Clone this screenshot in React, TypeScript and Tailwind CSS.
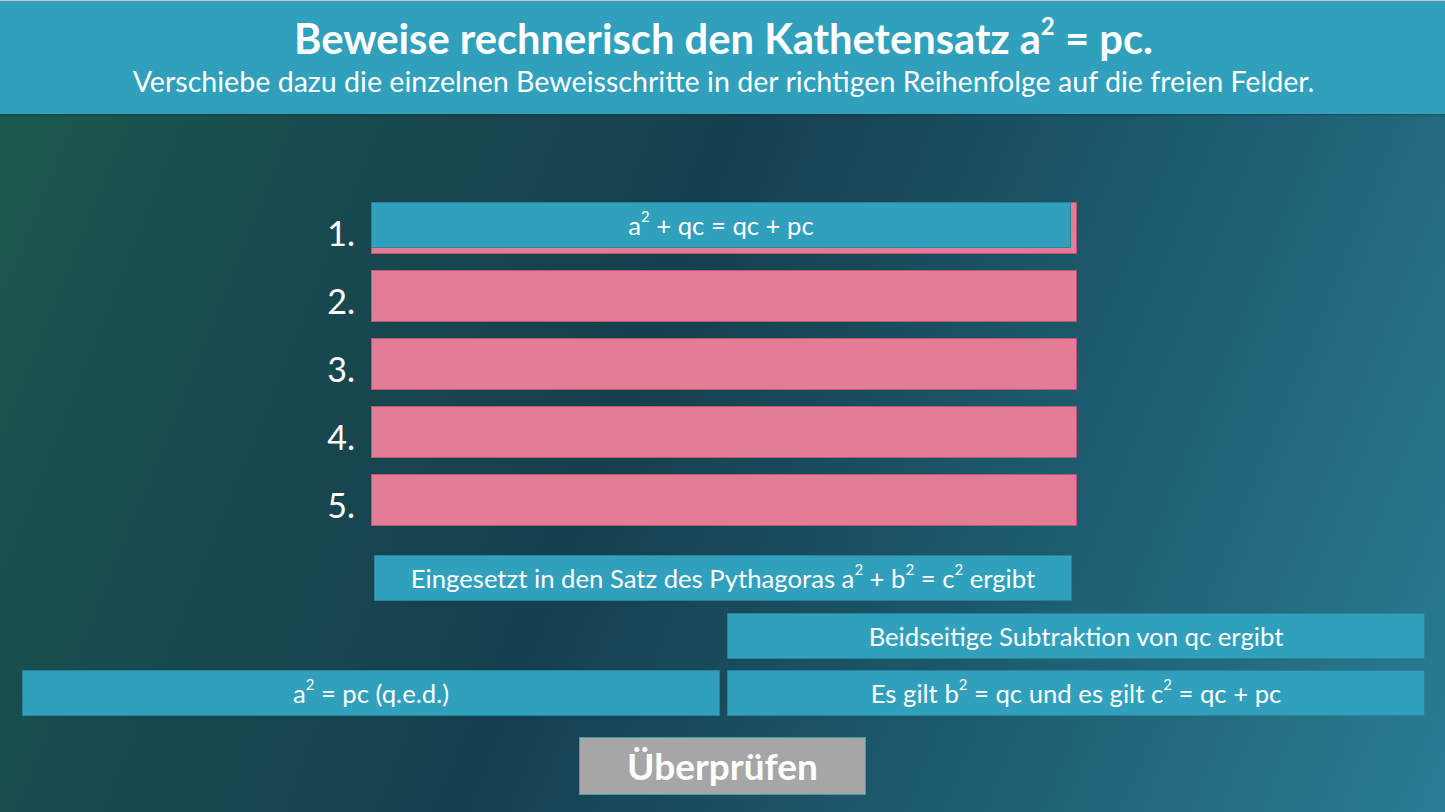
import React from 'react';

const font = { fontFamily: 'Lato, "Open Sans", sans-serif' };

function Sup({ children }: { children: React.ReactNode }) {
  return <sup className="relative -top-[0.18em] text-[0.58em] align-super leading-none">{children}</sup>;
}

function Card({ children, className = '' }: { children: React.ReactNode; className?: string }) {
  return (
    <div
      className={`flex h-[46px] w-[698px] items-center justify-center border border-[#2a819b] bg-[#30a0bd] text-[25.7px] text-white ${className}`}
    >
      <span>{children}</span>
    </div>
  );
}

export default function App() {
  const slots = [1, 2, 3, 4, 5];

  return (
    <div
      style={font}
      className="flex h-[812px] w-full flex-col overflow-hidden bg-[linear-gradient(112deg,#1b5b4c_0%,#18484f_25%,#163f4f_45%,#1c5a6d_70%,#2a7d93_100%)] text-white"
    >
      {/* Header */}
      <div className="flex h-[114px] flex-col items-center border-t border-t-[#c8c8c8] bg-[#30a0bd] pl-[2px] shadow-[0_1px_2px_rgba(0,0,0,0.25)]">
        <h1 className="mt-[13px] text-[41.7px] font-bold leading-[48px]">
          Beweise rechnerisch den Kathetensatz a<Sup>2</Sup> = pc.
        </h1>
        <p className="mt-[1px] text-[28.6px] leading-[36px]">
          Verschiebe dazu die einzelnen Beweisschritte in der richtigen Reihenfolge auf die freien Felder.
        </p>
      </div>

      {/* Slots */}
      <div className="mt-[88px] flex flex-col gap-[16px]">
        {slots.map((n) => (
          <div key={n} className="flex items-stretch">
            <div className="flex w-[357px] items-end justify-end pb-[1px] pr-[2px] text-[34px] leading-[40px]">
              {n}.
            </div>
            <div className="ml-[14px] h-[52px] w-[706px] border border-[#b45a71] bg-[#e37c95]">
              {n === 1 && (
                <div className="-ml-px -mt-px flex h-[46px] w-[700px] items-center justify-center border border-[#2a819b] bg-[#30a0bd] text-[25.7px]">
                  <span>
                    a<Sup>2</Sup> + qc = qc + pc
                  </span>
                </div>
              )}
            </div>
          </div>
        ))}
      </div>

      {/* Proof steps */}
      <div className="mt-[29px] flex flex-col">
        <Card className="ml-[374px]">
          Eingesetzt in den Satz des Pythagoras a<Sup>2</Sup> + b<Sup>2</Sup> = c<Sup>2</Sup> ergibt
        </Card>
        <Card className="ml-[727px] mt-[12px]">Beidseitige Subtraktion von qc ergibt</Card>
        <div className="mt-[11px] flex gap-[7px] pl-[22px]">
          <Card>
            a<Sup>2</Sup> = pc (q.e.d.)
          </Card>
          <Card>
            Es gilt b<Sup>2</Sup> = qc und es gilt c<Sup>2</Sup> = qc + pc
          </Card>
        </div>
      </div>

      <div className="mt-[21px] flex pl-[579px]">
        <button className="h-[58px] w-[287px] border border-[#4a9aa8] bg-[#a6a6a6] text-[37px] font-bold text-white">
          Überprüfen
        </button>
      </div>
    </div>
  );
}
